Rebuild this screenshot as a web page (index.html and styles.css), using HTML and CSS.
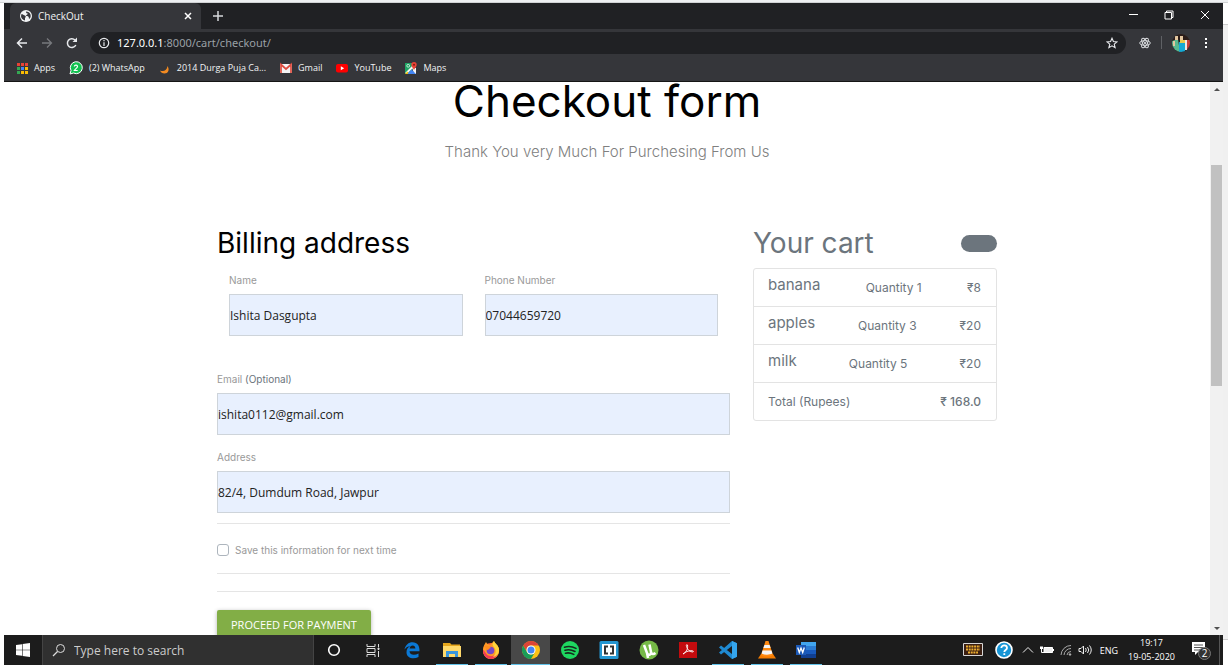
FILE: index.html
```html
<!DOCTYPE html>
<html lang="en">
<head>
<meta charset="utf-8">
<title>CheckOut</title>
<link rel="stylesheet" href="styles.css">
</head>
<body>
<div class="desktop">
  <header class="browser">
    <div class="tabs">
      <div class="tab">
        <svg class="icon12" viewBox="0 0 24 24"><circle cx="12" cy="12" r="12" fill="#f1f3f4"/><path d="M3 8c3 0 4 3 7 3 2 1 2 3 0 5v5C5 20 2 16 2 12zM12 3c0 3 1 4 4 4-1 3-4 2-4 5 4 0 6 1 6 6 3-2 4-5 3-9-1-4-5-6-9-6z" fill="#35363a"/></svg>
        <span class="tab-title">CheckOut</span>
        <button class="bare" aria-label="Close tab"><svg class="icon8" viewBox="0 0 8 8"><path d="M1 1l6 6M7 1L1 7" stroke="#fff" stroke-width="1.5"/></svg></button>
      </div>
      <button class="bare new-tab" aria-label="New tab"><svg class="icon10" viewBox="0 0 10 10"><path d="M5 0v10M0 5h10" stroke="#d5d7da" stroke-width="1.5"/></svg></button>
      <div class="window-buttons">
        <button class="bare" aria-label="Minimize"><svg class="icon10" viewBox="0 0 10 10"><path d="M1 4.500h9" stroke="#fff"/></svg></button>
        <button class="bare" aria-label="Restore"><svg class="icon10" viewBox="0 0 10 10"><path d="M1 2.500h6.500v6.500H1zM2.500 2.500v-1.500h6.500v6.500H7.500" fill="none" stroke="#fff"/></svg></button>
        <button class="bare" aria-label="Close"><svg class="icon10" viewBox="0 0 10 10"><path d="M1 1l8 8M9 1L1 9" stroke="#fff"/></svg></button>
      </div>
    </div>
    <div class="toolbar">
      <button class="bare" aria-label="Back"><svg class="icon12" viewBox="0 0 12 12"><path d="M11 6H2M6 1.500L1.500 6 6 10.500" fill="none" stroke="#e8eaed" stroke-width="1.500"/></svg></button>
      <button class="bare" aria-label="Forward"><svg class="icon12" viewBox="0 0 12 12"><path d="M1 6h9M6 1.500L10.500 6 6 10.500" fill="none" stroke="#77797d" stroke-width="1.300"/></svg></button>
      <button class="bare" aria-label="Reload"><svg class="icon12" viewBox="0 0 12 12"><path d="M9.800 8A4.400 4.400 0 1 1 9 3" fill="none" stroke="#e8eaed" stroke-width="1.500"/><path d="M11 .5V5H6.500z" fill="#e8eaed"/></svg></button>
      <div class="address">
        <svg class="icon12" viewBox="0 0 12 12"><circle cx="6" cy="6" r="4.700" fill="none" stroke="#e8eaed" stroke-width="1.200"/><path d="M6 5.200V9M6 3v1.300" stroke="#e8eaed" stroke-width="1.200"/></svg>
        <span class="url"><span class="host">127.0.0.1</span>:8000/cart/checkout/</span>
        <button class="bare" aria-label="Bookmark"><svg class="icon12" viewBox="0 0 24 24"><path d="M12 2.500l2.800 6.600 7.200.6-5.500 4.700 1.700 7-6.200-3.700-6.200 3.700 1.700-7L2 9.700l7.200-.6z" fill="none" stroke="#e8eaed" stroke-width="2.200"/></svg></button>
      </div>
      <div class="extensions">
        <svg class="icon12" viewBox="0 0 24 24" fill="none" stroke="#e0e2e5" stroke-width="1.800"><ellipse cx="12" cy="12" rx="10.500" ry="4.500"/><ellipse cx="12" cy="12" rx="10.500" ry="4.500" transform="rotate(60 12 12)"/><ellipse cx="12" cy="12" rx="10.500" ry="4.500" transform="rotate(120 12 12)"/><circle cx="12" cy="12" r="1.500" fill="#e0e2e5"/></svg>
        <span class="divider"></span>
        <svg class="avatar" viewBox="0 0 18 18"><defs><clipPath id="face"><circle cx="9" cy="9" r="9"/></clipPath></defs><g clip-path="url(#face)"><path fill="#2b1d19" d="M0 0h18v18H0z"/><path fill="#58b98f" d="M0 7l6-2 2 13H0z"/><path fill="#e3c7a0" d="M3 2h3v4H3zM8 2h3v4H8zM1 7h2v5H1z"/><path fill="#16a9d3" d="M7 8h6v10H7z"/><path fill="#e9c84b" d="M8 6h5v3H8z"/><path fill="#f1e6df" d="M13 6h2v10h-2z"/><path fill="#c43f3a" d="M15 6h3v10h-3z"/></g></svg>
        <button class="bare" aria-label="Menu"><svg class="icon12" viewBox="0 0 12 12" fill="#fff"><path d="M5 1h2v2H5zM5 5h2v2H5zM5 9h2v2H5z"/></svg></button>
      </div>
    </div>
    <nav class="bookmarks">
      <a href="#"><svg class="icon12" viewBox="0 0 12 12"><path fill="#e94235" d="M1 1h3v3H1zM5 1h3v3H5zM9 1h3v3H9z"/><path fill="#34a853" d="M1 5h3v3H1z"/><path fill="#4285f4" d="M5 5h3v3H5z"/><path fill="#fbbc04" d="M9 5h3v3H9zM5 9h3v3H5zM9 9h3v3H9z"/><path fill="#34a853" d="M1 9h3v3H1z"/></svg>Apps</a>
      <a href="#"><svg class="icon14" viewBox="0 0 14 14"><path d="M1 13l1-3.500A6 6 0 1 1 4.500 12z" fill="#12c150" stroke="#fff"/><path d="M5.300 5.500c.3-2 3.500-1.700 3.200.2C8.300 7 6 8 5.300 9.500h3.400" fill="none" stroke="#fff" stroke-width="1.200"/></svg>(2) WhatsApp</a>
      <a href="#"><svg class="icon12" viewBox="0 0 12 12"><path d="M1 8.500c3.500 1.500 7 0 7.500-4.500 2.500 4 .5 7.500-3 7.500-2 0-3.800-1-4.500-3z" fill="#f18a21"/></svg>2014 Durga Puja Ca...</a>
      <a href="#"><svg class="icon12" viewBox="0 0 12 12"><path fill="#f4f4f4" d="M0 2h12v9H0z"/><path d="M1 11V2.500l5 4.500 5-4.500V11" fill="none" stroke="#dd4b3e" stroke-width="1.700"/></svg>Gmail</a>
      <a href="#"><svg class="icon12" viewBox="0 0 12 12"><rect y="2" width="12" height="8.500" rx="2" fill="#f00"/><path d="M4.800 4.300v4L8.200 6.300z" fill="#fff"/></svg>YouTube</a>
      <a href="#"><svg class="icon12" viewBox="0 0 12 12"><path fill="#1fa463" d="M0 1h9v5L2 12H0z"/><path d="M1 11.500L8.500 4" stroke="#f5f5f5" stroke-width="2"/><path fill="#f5f5f5" d="M7 5l4 1v6H9z"/><path fill="#fbbc04" d="M0 12l2.500-2.500L4 12z"/><path fill="#4285f4" d="M2.500 12L6.500 7.500 11 12z"/><circle cx="3.200" cy="3.800" r="1.400" fill="none" stroke="#fff" stroke-width=".7"/><path d="M9 8C8 5.500 6.300 4.800 6.300 2.700a2.700 2.700 0 0 1 5.400 0C11.700 4.800 10 5.500 9 8z" fill="#ea4335"/><circle cx="9" cy="2.700" r="1" fill="#7c1b16"/></svg>Maps</a>
    </nav>
  </header>

  <div class="viewport">
    <main class="page">
      <h1 class="title">Checkout form</h1>
      <p class="lead">Thank You very Much For Purchesing From Us</p>
      <div class="columns">
        <form class="billing">
          <h2 class="section-title">Billing address</h2>
          <div class="pair">
            <div class="field"><label for="name">Name</label><input id="name" type="text" value="Ishita Dasgupta"></div>
            <div class="field"><label for="phone">Phone Number</label><input id="phone" type="text" value="07044659720"></div>
          </div>
          <div class="field email"><label for="email">Email <span class="muted">(Optional)</span></label><input id="email" type="text" value="ishita0112@gmail.com"></div>
          <div class="field"><label for="address">Address</label><input id="address" type="text" value="82/4, Dumdum Road, Jawpur"></div>
          <hr class="rule">
          <div class="save"><input id="save" type="checkbox"><label for="save">Save this information for next time</label></div>
          <hr class="rule">
          <hr class="rule spaced">
          <button class="pay" type="button">PROCEED FOR PAYMENT</button>
        </form>
        <aside class="cart">
          <h2 class="section-title cart-title">Your cart<span class="badge"></span></h2>
          <ul class="items">
            <li><h6>banana</h6><span>Quantity 1</span><span>₹8</span></li>
            <li><h6>apples</h6><span>Quantity 3</span><span>₹20</span></li>
            <li><h6>milk</h6><span>Quantity 5</span><span>₹20</span></li>
            <li><span>Total (Rupees)</span><strong>₹ 168.0</strong></li>
          </ul>
        </aside>
      </div>
    </main>
    <div class="scrollbar">
      <svg class="arrow" viewBox="0 0 13 14"><path d="M4 9l3-3 3 3z" fill="#505050"/></svg>
      <span class="thumb"></span>
      <svg class="arrow" viewBox="0 0 13 14"><path d="M4 6l3 3 3-3z" fill="#505050"/></svg>
    </div>
  </div>

  <footer class="taskbar">
    <button class="bare start" aria-label="Start"><svg class="icon14" viewBox="0 0 14 14" fill="#fff"><path d="M0 2l6-.8v5.500H0zM6.600 1.100L14 0v6.700H6.600zM0 7.300h6v5.500L0 12zM6.600 7.300H14V14l-7.400-1.100z"/></svg></button>
    <label class="search"><svg class="icon14" viewBox="0 0 14 14"><circle cx="8.500" cy="5.500" r="4" fill="none" stroke="#ddd"/><path d="M5.500 8.500L1 13" stroke="#ddd" stroke-width="1.200"/></svg><input type="text" placeholder="Type here to search" aria-label="Type here to search"></label>
    <div class="apps">
      <button aria-label="Cortana"><svg viewBox="0 0 20 20"><circle cx="10" cy="10" r="5.300" fill="none" stroke="#fff" stroke-width="1.600"/></svg></button>
      <button aria-label="Task view"><svg viewBox="0 0 20 20" fill="none" stroke="#ddd"><path d="M4 4v2.500h8V4M4 8.500h8v4H4zM4 17v-2.500h8V17M15.500 4v3M15.500 11v6"/><path d="M15 8h1v1.500h-1z" fill="#ddd"/></svg></button>
      <button aria-label="Edge"><svg viewBox="0 0 20 20"><path d="M2.500 9.500C3.500 5 6.500 2.300 10.500 2.300c5 0 7.300 3.800 7 9H7.500c.2 3.800 5 4.600 9 2.200V17c-5 2.700-12 1.200-12-4.800 0-3 1.600-5.300 4-6.200-2.700.3-4.600 1.500-6 3.500zM7.600 8.600h5.800c0-4-5.300-4-5.800 0z" fill="#0b78d4"/></svg></button>
      <button class="open" aria-label="Files"><svg viewBox="0 0 20 20"><path d="M1 3h7l1.500 1.500H18V7H1z" fill="#e5a61c"/><path d="M1 6h18v11H1z" fill="#ffd96b"/><path d="M4 17v-6h12v6h-3v-3H7v3z" fill="#3a96dd"/></svg></button>
      <button class="open" aria-label="Firefox"><svg viewBox="0 0 20 20"><circle cx="10" cy="11" r="8" fill="#ff6238"/><path d="M2 10C2 6 4 4 5 2c1 2 2 2.500 4 3l4-4c1 3 4 4 5 8 1 6-4 10-8 10-5 0-8-4-8-9z" fill="#ff9a26"/><path d="M2 10c2 0 3 7 9 6 4-.5 6-4 5-8 3 5-1 11-6 11-5 0-8-4-8-9z" fill="#f43b57"/><path d="M13 1c1 3 5 4 5 9 0 4-3 7-6 7 3-3 4-7 0-11-1-2 0-4 1-5z" fill="#ffd43c"/><circle cx="9.500" cy="10.500" r="3.800" fill="#7548c8"/><path d="M3 6c2-1 5 0 7 2-2 0-2 2-4 2z" fill="#ff8c1e"/></svg></button>
      <button class="open active" aria-label="Chrome"><svg viewBox="0 0 20 20"><circle cx="10" cy="10" r="9" fill="#fbc116"/><path d="M2.200 5.500A9 9 0 0 1 17.800 5.500H10a4.500 4.500 0 0 0-3.900 6.700z" fill="#dc4437"/><path d="M2.200 5.500l3.900 6.700A4.500 4.500 0 0 0 13.900 12.200L10 19A9 9 0 0 1 2.200 5.500z" fill="#199d58"/><circle cx="10" cy="10" r="4.500" fill="#fff"/><circle cx="10" cy="10" r="3.500" fill="#4285f4"/></svg></button>
      <button aria-label="Spotify"><svg viewBox="0 0 20 20"><circle cx="10" cy="10" r="9" fill="#1ed760"/><path d="M4.500 7.200q6-1.700 11.500 1.200M5 10.300q5-1.400 10 1.200M5.500 13.200q4-1 8.300 1.200" fill="none" stroke="#17291d" stroke-width="1.600" stroke-linecap="round"/></svg></button>
      <button aria-label="Brackets"><svg viewBox="0 0 20 20"><rect x=".5" y="1" width="19" height="18" rx="1.500" fill="#2596d1"/><path fill="#fff" d="M3 4h14v12H3z"/><path d="M9 6.500H6v7h3M11 6.500h3v7h-3" fill="none" stroke="#333" stroke-width="2"/></svg></button>
      <button aria-label="uTorrent"><svg viewBox="0 0 20 20"><circle cx="10" cy="10" r="9.500" fill="#76b947"/><path d="M5 5l3 8c1 3 4.500 2 4-1l-1.500-7.500M12 12c.5 2.500 2.500 2.500 4.500 1M8 13l1 5" fill="none" stroke="#fff" stroke-width="2.500"/></svg></button>
      <button aria-label="Acrobat"><svg viewBox="0 0 20 20"><path fill="#c30b0e" d="M1 2h18v16H1z"/><path d="M5 14c4-2 5-6 4.500-9-.8-1-1.500 0-1 1.500C9.500 10 12 12 15 12c1-.6 0-1.500-2-1.300-3 .3-6 1.300-8 3.300z" fill="none" stroke="#fff" stroke-width=".9"/></svg></button>
      <button class="open" aria-label="Code"><svg viewBox="0 0 20 20"><path d="M14 1l5 2.200v13.600L14 19 1 7.500 3 5.500 14 14V6L3 14.500l-2-2z" fill="#1f8ad2"/><path d="M14 1l5 2.200v13.600L14 19z" fill="#35a5ed"/></svg></button>
      <button class="open" aria-label="VLC"><svg viewBox="0 0 20 20"><path d="M4 14h12l3 4.500H1z" fill="#f57c00"/><path d="M8.500 1h3L16 15c-2 2-10 2-12 0z" fill="#ff8a12"/><path d="M7.400 5h5.200l1 3H6.400zM5.500 10.500h9l.9 3c-3 1.500-8 1.500-10.800 0z" fill="#f4f4f4"/></svg></button>
      <button class="open" aria-label="Word"><svg viewBox="0 0 20 20"><path fill="#41a5ee" d="M5 2h15v4H5z"/><path fill="#2b7cd3" d="M5 6h15v4H5z"/><path fill="#185abd" d="M5 10h15v4H5z"/><path fill="#103f91" d="M5 14h15v4H5z"/><path fill="#1b59b7" d="M0 5h10v10H0z"/><path d="M1.700 7.500l1.600 5L5 8l1.700 4.500 1.600-5" fill="none" stroke="#fff" stroke-width="1.300"/></svg></button>
    </div>
    <div class="tray">
      <svg class="keyboard" viewBox="0 0 20 14"><path fill="#3b1f12" stroke="#d7d7d7" d="M.5.500h19v12H.5z"/><path d="M3 3.500h14M3 6.500h14M5 9.500h10" stroke="#edae2f" stroke-width="1.800" stroke-dasharray="2 .7"/></svg>
      <svg class="help" viewBox="0 0 18 18"><circle cx="9" cy="9" r="8" fill="#1795d6" stroke="#fff" stroke-width="1.600"/><path d="M6.300 7C6.300 3.600 12 3.600 12 7c0 2-2.700 2-2.700 4M9.300 12.200v1.900" fill="none" stroke="#fff" stroke-width="1.800"/></svg>
      <svg class="icon12" viewBox="0 0 12 12"><path d="M1 8.500l5-5 5 5" fill="none" stroke="#eee"/></svg>
      <svg class="icon14" viewBox="0 0 14 12"><path d="M4 3.500h8.500v5H4z" fill="#eee" stroke="#fff"/><path d="M13 5h1v2h-1zM0 2.500h3v2.500H0z" fill="#fff"/><path d="M1.500 5v3.500H4" stroke="#fff" fill="none"/></svg>
      <svg class="icon12" viewBox="0 0 12 12" fill="none" stroke="#aaa"><path d="M1 11A10 10 0 0 1 11 1.500M4 11a7 7 0 0 1 7-6.500M7 11a4 4 0 0 1 4-3.500"/><circle cx="10" cy="10.500" r=".8" fill="#fff"/></svg>
      <svg class="icon14" viewBox="0 0 14 12" fill="none" stroke="#eee"><path d="M1 4.500h2L5.500 2v8L3 7.500H1zM7.500 4q1.500 2 0 4M9.500 3q2.500 3 0 6M11.500 1.500q3.500 4.500 0 9"/></svg>
      <span class="lang">ENG</span>
      <div class="clock"><time>19:17</time><time>19-05-2020</time></div>
      <svg class="notice" viewBox="0 0 20 20"><path d="M1 2h13v10H7l-3 3v-3H1z" fill="#fff"/><path d="M3 5h9M3 7.500h9M3 10h6" stroke="#555"/><circle cx="13.500" cy="13.500" r="6" fill="#333" stroke="#777"/><text x="13.500" y="17" class="count">2</text></svg>
    </div>
  </footer>
</div>
</body>
</html>
```
FILE: styles.css
```css
* { box-sizing: border-box; }

body {
  margin: 0;
  font-family: "Open Sans", "Noto Sans", sans-serif;
  background: #fff;
}

h1, h2, h6, p, ul { margin: 0; padding: 0; font-weight: 400; }

svg { display: block; flex: none; }
.icon8 { width: 8px; height: 8px; }
.icon10 { width: 10px; height: 10px; }
.icon12 { width: 12px; height: 12px; }
.icon14 { width: 14px; height: 14px; }

.bare { padding: 0; border: 0; background: none; }

.desktop {
  display: grid;
  grid-template-rows: auto 1fr auto;
  height: 100vh;
  padding: 3px 5px 6px 4px;
  background:
    linear-gradient(#eef0f2 2px, #d0d2d4 2px, #d0d2d4 3px, transparent 3px),
    linear-gradient(#fff 24px, #ccc 24px, #ccc 25px, #f0f0f0 25px, #f0f0f0 639px, #ccc 639px, #ccc 640px, #fff 640px) right / 5px 100% no-repeat,
    #fff;
}

/* Browser chrome */
.browser { background: #35363a; color: #f1f3f4; border-bottom: 1px solid #151515; }

.tabs { display: flex; height: 26px; background: #202124; }
.tab {
  display: flex;
  align-items: center;
  gap: 6px;
  width: 191px;
  margin-left: 6px;
  padding: 0 9px 0 10px;
  background: #35363a;
  border-radius: 6px 6px 0 0;
}
.tab-title { flex: 1; font-size: 10px; }
.new-tab { padding: 0 12px; }
.window-buttons { display: flex; gap: 26px; margin-left: auto; padding: 0 13px 3px 0; align-items: center; }

.toolbar { display: flex; align-items: center; gap: 13px; height: 27px; padding: 0 11px 0 12px; }
.address {
  display: flex;
  flex: 1;
  align-items: center;
  gap: 7px;
  height: 22px;
  margin-left: -1px;
  padding: 0 8px;
  border-radius: 11px;
  background: #202124;
}
.url { flex: 1; font-size: 11px; color: #9aa0a6; font-family: "Noto Sans", sans-serif; }
.host { color: #fff; }
.extensions { display: flex; align-items: center; gap: 10px; }
.divider { width: 1px; height: 13px; background: #5f6165; }
.avatar { width: 18px; height: 18px; }

.bookmarks { display: flex; align-items: center; gap: 14px; height: 25px; padding: 0 0 2px 12px; font-size: 9px; }
.bookmarks a { display: flex; align-items: center; gap: 6px; color: #f1f3f4; text-decoration: none; white-space: nowrap; }

/* Web page */
.viewport { display: flex; min-height: 0; overflow: hidden; background: #fff; }
.page { flex: 1; font-family: Inter, sans-serif; color: #6c757d; }

.title { font-size: 44px; line-height: 38px; text-align: center; color: #000; }
.lead { margin-top: 20px; font-size: 15px; font-weight: 300; line-height: 24px; text-align: center; color: #808080; }

.columns {
  display: grid;
  grid-template-columns: 1fr 244px;
  gap: 23px;
  align-items: start;
  max-width: 780px;
  margin: 63px auto 0;
}
.section-title { font-size: 28px; line-height: 32px; color: #000; }

.pair { display: grid; grid-template-columns: 1fr 1fr; gap: 22px; padding: 0 12px; margin: 13px 0 35px; }
.field { display: grid; gap: 6px; }
.email { margin-bottom: 14px; }
.field label { font-size: 10px; line-height: 16px; color: #999; }
.field .muted { color: #6c757d; }
.field input {
  width: 100%;
  height: 42px;
  padding: 0;
  border: 1px solid #ced4da;
  background: #e8f0fe;
  font: 12px "Open Sans", "Noto Sans", sans-serif;
  color: #222;
}

.rule { height: 1px; margin: 10px 0 0; border: 0; background: #e5e5e5; }
.rule.spaced { margin-top: 17px; }
.save { display: flex; align-items: center; gap: 6px; height: 38px; margin: 7px 0 -6px; }
.save input { appearance: none; width: 12px; height: 12px; margin: 0; border: 1px solid #adb5bd; border-radius: 3px; background: #fff; }
.save label { font-size: 10px; color: #999; }

.pay {
  height: 28px;
  margin-top: 18px;
  padding: 0 14px;
  border: 0;
  border-radius: 2px;
  background: #82ae46;
  box-shadow: 0 1px 4px rgba(0, 0, 0, .3);
  font: 11px "Open Sans", "Noto Sans", sans-serif;
  color: #fff;
}

.cart-title { display: flex; align-items: center; justify-content: space-between; color: #6c757d; }
.badge { width: 36px; height: 17px; border-radius: 9px; background: #6c757d; }
.items { margin-top: 9px; border: 1px solid #e3e3e3; border-radius: 3px; list-style: none; font-size: 12px; }
.items li { display: flex; justify-content: space-between; padding: 9px 15px 8px 14px; line-height: 20px; }
.items li + li { border-top: 1px solid #e3e3e3; }
.items h6 { font-size: 15px; line-height: 14px; }
.items strong { font-weight: 500; }

.scrollbar { display: flex; flex-direction: column; width: 13px; background: #f1f1f1; }
.arrow { width: 13px; height: 14px; }
.thumb { height: 40%; margin: 69px 1px auto; background: #c1c1c1; }

/* Taskbar */
.taskbar { display: flex; height: 30px; background: #1c1c1c; color: #fff; }
.start { display: grid; place-items: center; width: 38px; }
.search { display: flex; align-items: center; gap: 8px; width: 272px; padding: 0 9px; background: #303030; border: 1px solid #444; border-width: 0 1px; }
.search input { flex: 1; min-width: 0; padding: 0; border: 0; background: none; font: 12px "Open Sans", "Noto Sans", sans-serif; color: #ccc; }
.search input::placeholder { color: #ccc; }

.apps { display: grid; grid-template-columns: repeat(13, 1fr); width: 512px; }
.apps button { display: grid; place-items: center; padding: 0; border: 0; background: none; }
.apps svg { width: 20px; height: 20px; }
.apps .open { background: linear-gradient(#63c3ea, #63c3ea) bottom / 32px 1px no-repeat; }
.apps .active { background: linear-gradient(#63c3ea, #63c3ea) bottom / 100% 1px no-repeat #484848; }

.tray { display: flex; align-items: center; gap: 6px; margin-left: auto; margin-right: 3px; padding-right: 8px; border-right: 1px solid #555; font-size: 9px; }
.keyboard { width: 20px; height: 14px; margin-right: 6px; }
.help { width: 18px; height: 18px; margin-right: 3px; }
.lang { margin: 0 4px 0 2px; }
.clock { display: grid; line-height: 14px; text-align: center; }
.notice { width: 20px; height: 20px; margin-left: 10px; }
.count { font-size: 10px; text-anchor: middle; fill: #fff; }
```
